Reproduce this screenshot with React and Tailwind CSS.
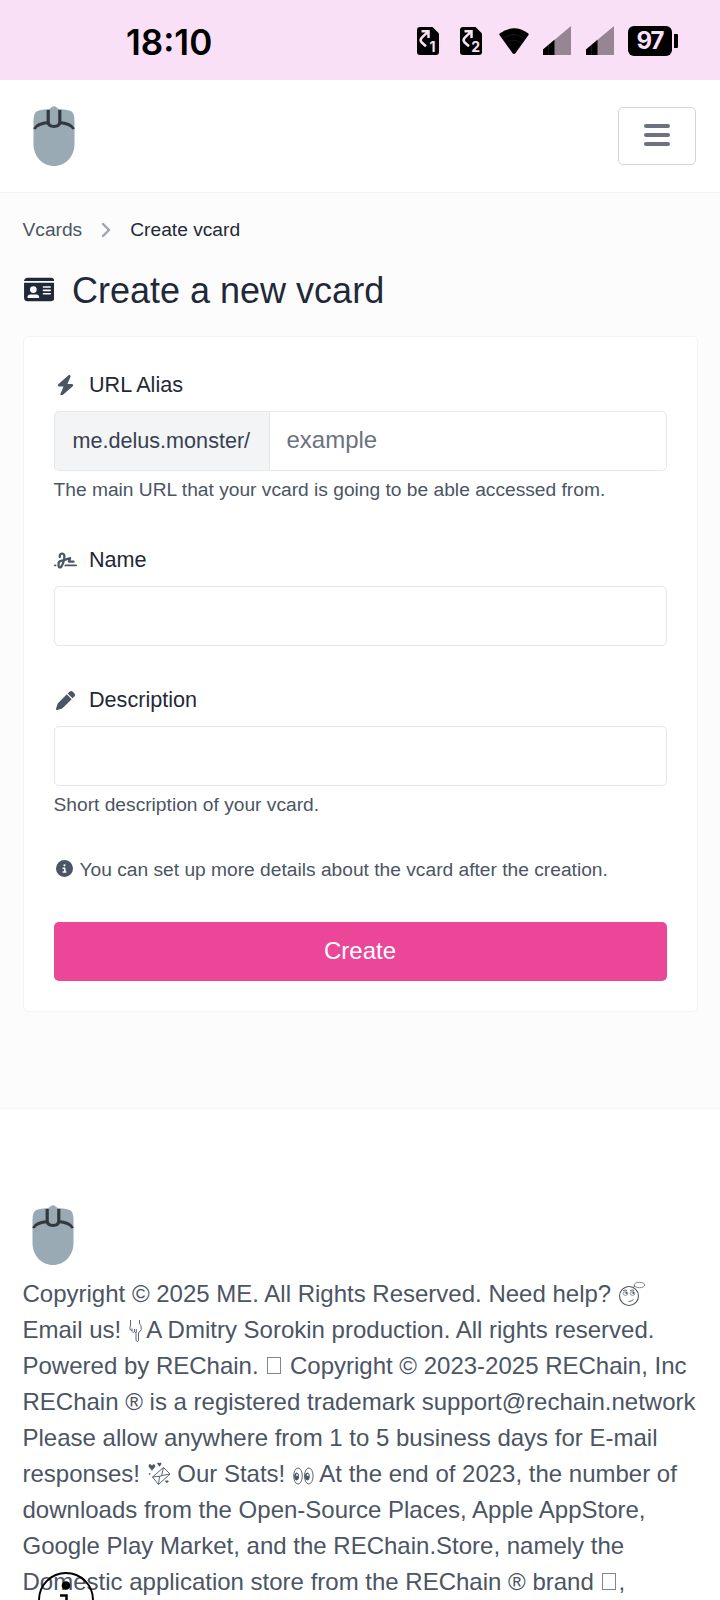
import { FaBolt, FaSignature, FaPen, FaCircleInfo, FaIdCard } from "react-icons/fa6";

function Mouse() {
  return (
    <svg width="42" height="61" viewBox="0 0 42 61" className="block">
      <path d="M0.500 15Q0.500 6 5 4.800Q9 3.600 14 3.300Q17.500 3 18.300 1.500Q21-.8 23.700 1.500Q24.500 3 28 3.300Q33 3.600 37 4.800Q41.500 6 41.500 15V38C41.500 51 32 60 21 60C10 60 0.500 51 0.500 38Z" fill="#99aab5" />
      <path d="M1.300 23C3.500 18.500 10 17 16 16.500M40.700 23C38.500 18.500 32 17 26 16.500" fill="none" stroke="#31393e" strokeWidth="2.800" />
      <path d="M15.200 4V16Q15.500 20.500 21 20.500Q26.500 20.500 26.800 16V4" fill="none" stroke="#31393e" strokeWidth="3.200" />
    </svg>
  );
}

function Sim({ n }) {
  return (
    <svg width="22" height="28" viewBox="0 0 22 28" className="block">
      <path d="M3 0H15.500L22 6.500V25Q22 28 19 28H3Q0 28 0 25V3Q0 0 3 0Z" fill="#000" />
      <path d="M4.500 4.300H11.500V11M11.500 4.300L5 10.300Q2.500 12.800 4.500 15.300L9 19.300" fill="none" stroke="#fae0f7" strokeWidth="2.500" />
      <text x="15.600" y="25.300" textAnchor="middle" fontSize="14" fontWeight="700" fontFamily="Inter" fill="#fae0f7">{n}</text>
    </svg>
  );
}

function Wifi() {
  return (
    <svg width="30" height="26" viewBox="0 0 30 26" className="block">
      <path d="M0.600 5.500Q15-5 29.400 5.500Q30 6.200 29.500 7L16.600 25Q15 26.800 13.400 25L0.500 7Q0 6.200 0.600 5.500Z" fill="#000" />
      <path d="M4 11Q15 2 26 11M7 15.500Q15 9 23 15.500" fill="none" stroke="#332d32" strokeWidth="0.500" />
    </svg>
  );
}

function Signal() {
  return (
    <svg width="28" height="29" viewBox="0 0 28 29" className="block">
      <path d="M0 23.500L28 0V29H0Z" fill="#978594" />
      <path d="M0 23.500L11.500 13.700V29H0Z" fill="#000" />
      <path d="M5.500 19V29" stroke="#332d32" strokeWidth="0.500" />
    </svg>
  );
}

function Label({ icon, children }) {
  return (
    <div className="flex h-8 items-center text-[21.6px] text-[#1f2937]">
      <span className="mr-[9.500px] flex w-[26px] justify-start text-[#4b5563]">{icon}</span>
      <span>{children}</span>
    </div>
  );
}

function Thinking() {
  return (
    <svg width="28" height="26" viewBox="0 0 28 26" className="inline-block align-[-5px]" fill="none" stroke="#4b5563" strokeWidth="1.100">
      <circle cx="11" cy="15" r="9.500" />
      <ellipse cx="21.500" cy="4" rx="5.300" ry="2.700" strokeWidth="0.700" />
      <path d="M15 6.500l2-1.500M5 10q2-2 4-.5M12 10q2-2 4-.5M10.500 20.500q3 0 5-2" strokeWidth="0.900" />
      <ellipse cx="7.500" cy="12.500" rx="2.200" ry="1.900" strokeWidth="0.600" />
      <ellipse cx="14.500" cy="12.500" rx="2.200" ry="1.900" strokeWidth="0.600" />
      <circle cx="8.300" cy="12" r="1" fill="#4b5563" stroke="none" />
      <circle cx="15.300" cy="12" r="1" fill="#4b5563" stroke="none" />
    </svg>
  );
}

function PointDown() {
  return (
    <svg width="13" height="24" viewBox="0 0 13 24" className="ml-px -mr-px inline-block align-[-5px]" fill="none" stroke="#4b5563" strokeWidth="0.900">
      <path d="M1.500 1V6L0.800 9Q1 11.500 3 12V9.500M3 12.500Q4.500 14.500 5.500 12.500V10M5.500 12.500Q6.500 14.500 7.300 13V10M7 13V21.500Q8.500 23.500 9.500 21.500V14L12.300 10.500Q12.500 6 10.500 4.500V1" />
    </svg>
  );
}

function LoveLetter() {
  return (
    <svg width="23" height="24" viewBox="0 0 23 24" className="ml-px inline-block align-[-4px]" fill="none" stroke="#4b5563" strokeWidth="0.900">
      <path d="M4.500 15L15.500 5.500L22 12L10.500 22.500ZM4.500 15L13.500 14L15.500 5.500M10.500 22.500L11.500 14.300M22 12L14 13.500" />
      <path d="M4 8.500L0.800 4.500Q.5 2 2.300 2.200L4 3.700L5.500 2.200Q7.500 2.300 7 4.700ZM11.500 4.500L9.300 1.800Q9.600.2 11.200 1.300Q13.200 0 13.300 2ZM18.800 21L17.200 19Q18 18 18.900 19Q20.200 18 20.500 19.500ZM1.500 13l-.8-1.500h2Z" fill="#4b5563" strokeWidth="0.300" />
    </svg>
  );
}

function Eyes() {
  return (
    <svg width="21" height="20" viewBox="0 0 21 20" className="ml-px inline-block align-[-4px]" fill="none" stroke="#4b5563" strokeWidth="0.900">
      <ellipse cx="5" cy="10" rx="4.300" ry="8" />
      <ellipse cx="15.800" cy="10" rx="4.300" ry="8" />
      <ellipse cx="3.600" cy="10.500" rx="2" ry="3.500" fill="#4b5563" />
      <ellipse cx="14.300" cy="10.500" rx="2" ry="3.500" fill="#4b5563" />
      <circle cx="4" cy="9" r="1" fill="#fff" stroke="none" />
      <circle cx="14.700" cy="9" r="1" fill="#fff" stroke="none" />
    </svg>
  );
}

function Box() {
  return <span className="mr-[2px] ml-[2px] inline-block h-[17px] w-[14px] border border-[#7f8690]" />;
}

const inputClass = "block h-[60px] w-full rounded-[5px] border border-[#e5e7eb] bg-white px-[18px] text-2xl outline-none placeholder:text-[#6b7280]";

export default function App() {
  return (
    <div className="relative h-[1600px] w-[720px] overflow-hidden bg-[#fcfcfc] font-['Liberation_Sans',sans-serif] text-[#4b5563]">
      <div className="flex h-20 items-start bg-[#fae0f7] pl-[126px] text-black">
        <div className="mt-[22px] w-[291px] font-['Inter',sans-serif] text-[35px] leading-10 font-semibold">18:10</div>
        <div className="mt-[27px]"><Sim n="1" /></div>
        <div className="mt-[27px] ml-[21px]"><Sim n="2" /></div>
        <div className="mt-7 ml-[17px]"><Wifi /></div>
        <div className="mt-[26px] ml-[14px]"><Signal /></div>
        <div className="mt-[26px] ml-[15px]"><Signal /></div>
        <div className="mt-[26px] ml-[14px] flex h-[30px] w-11 items-center justify-center rounded-[6px] bg-black font-['Inter',sans-serif] text-[24px] font-bold tracking-[-1px] text-[#fae0f7]">97</div>
        <div className="mt-[34px] ml-[2px] h-[14px] w-1 rounded-r-[1px] bg-black" />
      </div>

      <header className="flex h-[113px] items-start justify-between border-b border-[#f3f4f6] bg-white pt-[26px] pr-6 pl-[33px]">
        <Mouse />
        <button className="mt-px flex h-[58px] w-[78px] flex-col items-center justify-center gap-[5.3px] rounded-[5px] border border-[#d1d5db] pb-[2px]">
          <span className="h-1 w-[26px] rounded-full bg-[#6b7280]" />
          <span className="h-1 w-[26px] rounded-full bg-[#6b7280]" />
          <span className="h-1 w-[26px] rounded-full bg-[#6b7280]" />
        </button>
      </header>

      <main className="h-[915px] px-[22.5px] pt-[23px]">
        <nav className="flex h-[29px] items-center text-[19.2px]">
          <span>Vcards</span>
          <svg viewBox="0 0 10 16" className="mr-[19px] mb-[2px] ml-[19px] h-4 w-[10px]" fill="none" stroke="#9ca3af" strokeWidth="2.400" strokeLinecap="round" strokeLinejoin="round">
            <path d="M2 2L8 8L2 14" />
          </svg>
          <span className="text-[#1f2937]">Create vcard</span>
        </nav>
        <h1 className="mt-[19px] flex h-[54px] items-center text-4xl text-[#1f2937]">
          <FaIdCard className="mr-[18px] mb-[3px] ml-px h-[27px] w-[30.500px]" />
          Create a new vcard
        </h1>
        <section className="mt-[18px] h-[676px] rounded-[5px] border border-[#f3f4f6] bg-white px-[30px] pt-8">
          <Label icon={<FaBolt className="ml-[2px] h-[20.500px] w-[19px]" />}>URL Alias</Label>
          <div className="mt-[10px] flex">
            <span className="flex h-[60px] w-[215px] shrink-0 items-center rounded-l-[5px] border border-r-0 border-[#e5e7eb] bg-[#f3f4f6] pl-[18px] text-[21.6px] text-[#374151]">me.delus.monster/</span>
            <input placeholder="example" className="h-[60px] min-w-0 flex-1 rounded-r-[5px] border border-[#e5e7eb] bg-white px-[17px] pb-[2px] text-2xl outline-none placeholder:text-[#6b7280]" />
          </div>
          <p className="mt-[5px] h-7 text-[19.2px] leading-7">The main URL that your vcard is going to be able accessed from.</p>
          <div className="mt-10">
            <Label icon={<FaSignature className="h-[19px] w-[23px]" />}>Name</Label>
            <input className={`mt-[10px] ${inputClass}`} />
          </div>
          <div className="mt-[38px]">
            <Label icon={<FaPen className="ml-[2px] size-[19px]" />}>Description</Label>
            <input className={`mt-[10px] ${inputClass}`} />
          </div>
          <p className="mt-[5px] h-7 text-[19.2px] leading-7">Short description of your vcard.</p>
          <p className="mt-[37px] flex h-7 items-center text-[19.2px]">
            <FaCircleInfo className="mr-[7px] mb-[3px] ml-[2px] size-[17px]" />
            You can set up more details about the vcard after the creation.
          </p>
          <button className="mt-[38px] block h-[59px] w-full rounded-[5px] bg-[#ec4699] pb-[2px] text-2xl text-white">Create</button>
        </section>
      </main>

      <footer className="h-[492px] border-t border-[#f3f4f6] bg-white pt-24 pl-[22.5px]">
        <div className="pl-[9.500px]"><Mouse /></div>
        <div className="mt-[10px] text-2xl leading-9 whitespace-nowrap">
          <div className="h-9">Copyright © 2025 ME. All Rights Reserved. Need help? <Thinking /></div>
          <div className="h-9">Email us! <PointDown /> A Dmitry Sorokin production. All rights reserved.</div>
          <div className="h-9">Powered by REChain. <Box /> Copyright © 2023-2025 REChain, Inc</div>
          <div className="h-9">REChain ® is a registered trademark support@rechain.network</div>
          <div className="h-9">Please allow anywhere from 1 to 5 business days for E-mail</div>
          <div className="h-9">responses! <LoveLetter /> Our Stats! <Eyes /> At the end of 2023, the number of</div>
          <div className="h-9">downloads from the Open-Source Places, Apple AppStore,</div>
          <div className="h-9">Google Play Market, and the REChain.Store, namely the</div>
          <div className="h-9">Domestic application store from the REChain ® brand <Box />,</div>
        </div>
      </footer>

      <svg width="56" height="28" viewBox="0 0 56 28" className="absolute bottom-0 left-[38px]">
        <circle cx="28" cy="28" r="27" fill="none" stroke="#000" strokeWidth="2" />
        <circle cx="28" cy="13.500" r="4.300" fill="#000" />
        <path d="M22 23.500H28.500V28" fill="none" stroke="#000" strokeWidth="2.500" />
      </svg>
    </div>
  );
}
